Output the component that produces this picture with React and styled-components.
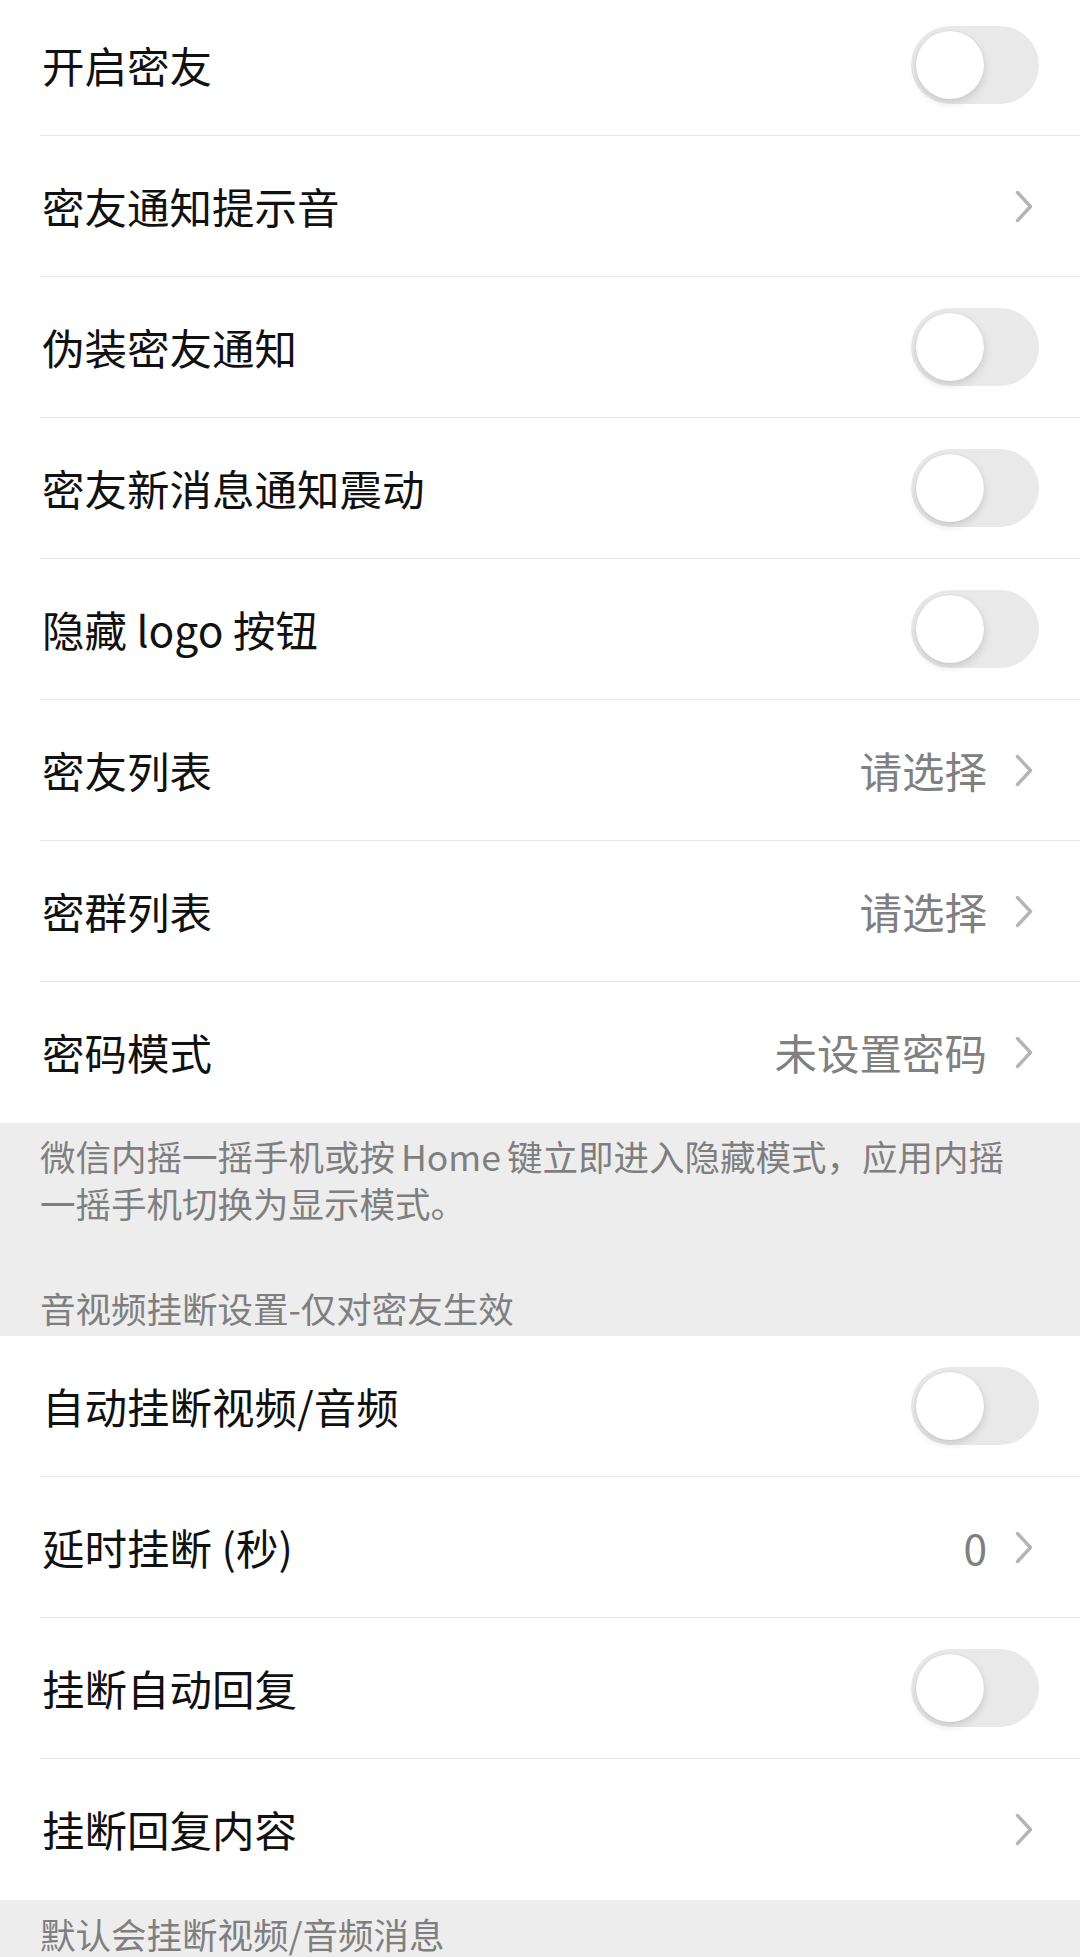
import React from "react";
import styled, { createGlobalStyle } from "styled-components";

const Global = createGlobalStyle`
  html, body { margin: 0; padding: 0; background: #ffffff; }
  body {
    font-family: "PingFang SC", "Noto Sans CJK SC", "Noto Sans", sans-serif;
    -webkit-font-smoothing: antialiased;
    overflow: hidden;
  }
`;

const Page = styled.div`
  width: 1080px;
  height: 1957px;
  overflow: hidden;
  background: #ededed;
`;

const Scroller = styled.div`
  margin-top: -5px;
`;

const Section = styled.div`
  background: #ffffff;
`;

const Row = styled.div`
  padding-left: 40px;
  background: #ffffff;
`;

const RowInner = styled.div`
  height: ${(p) => (p.$last ? "141px" : "140px")};
  border-bottom: ${(p) => (p.$last ? "none" : "1.5px solid #e8e8e8")};
  display: flex;
  align-items: center;
  justify-content: space-between;
  padding-right: 41px;
`;

const Label = styled.span`
  font-size: 42.5px;
  color: #111111;
  line-height: 1;
  padding-left: 2px;
`;

const Accessory = styled.div`
  display: flex;
  align-items: center;
  gap: 28px;
`;

const Value = styled.span`
  font-size: 42.5px;
  color: #808080;
  line-height: 1;
`;

const ChevronWrap = styled.span`
  display: flex;
  margin-right: 6px;
`;

const Track = styled.div`
  width: 128px;
  height: 78px;
  border-radius: 39px;
  background: #e9e9ea;
  box-sizing: border-box;
  padding: 5px;
  display: flex;
  align-items: center;
`;

const Knob = styled.div`
  width: 68px;
  height: 68px;
  border-radius: 50%;
  background: #ffffff;
  box-shadow: 0 4px 9px rgba(0, 0, 0, 0.13), 0 0 1.5px rgba(0, 0, 0, 0.12);
`;

const Footer = styled.div`
  background: #ededed;
  padding: ${(p) => p.$pad || "9px 40px 0"};
  color: #7f7f7f;
  font-size: 35.5px;
  line-height: 47px;
`;

const Note = styled.div`
  padding-right: 30px;
`;

const Latin = styled.span`
  margin: 0 6px;
`;

const Header = styled.div`
  margin-top: 58px;
  padding-bottom: 5px;
`;

const Chevron = () => (
  <ChevronWrap>
    <svg width="18" height="33" viewBox="0 0 18 33" fill="none">
      <path
        d="M2.5 2.5 L15.5 16.5 L2.5 30.5"
        stroke="#b5b5b5"
        strokeWidth="3.4"
        strokeLinecap="round"
        strokeLinejoin="round"
      />
    </svg>
  </ChevronWrap>
);

const Switch = () => (
  <Track>
    <Knob />
  </Track>
);

const Item = ({ label, type, value, last }) => (
  <Row>
    <RowInner $last={last}>
      <Label>{label}</Label>
      {type === "switch" ? (
        <Switch />
      ) : (
        <Accessory>
          {value !== undefined && <Value>{value}</Value>}
          <Chevron />
        </Accessory>
      )}
    </RowInner>
  </Row>
);

const section1 = [
  { label: "开启密友", type: "switch" },
  { label: "密友通知提示音", type: "link" },
  { label: "伪装密友通知", type: "switch" },
  { label: "密友新消息通知震动", type: "switch" },
  { label: "隐藏 logo 按钮", type: "switch" },
  { label: "密友列表", type: "link", value: "请选择" },
  { label: "密群列表", type: "link", value: "请选择" },
  { label: "密码模式", type: "link", value: "未设置密码" },
];

const section2 = [
  { label: "自动挂断视频/音频", type: "switch" },
  { label: "延时挂断 (秒)", type: "link", value: "0" },
  { label: "挂断自动回复", type: "switch" },
  { label: "挂断回复内容", type: "link" },
];

export default function App() {
  return (
    <Page>
      <Global />
      <Scroller>
        <Section>
          {section1.map((it, i) => (
            <Item key={it.label} {...it} last={i === section1.length - 1} />
          ))}
        </Section>
        <Footer>
          <Note>
            微信内摇一摇手机或按<Latin>Home</Latin>键立即进入隐藏模式，应用内摇一摇手机切换为显示模式。
          </Note>
          <Header>音视频挂断设置-仅对密友生效</Header>
        </Footer>
        <Section>
          {section2.map((it, i) => (
            <Item key={it.label} {...it} last={i === section2.length - 1} />
          ))}
        </Section>
        <Footer $pad="10px 40px 0">默认会挂断视频/音频消息</Footer>
      </Scroller>
    </Page>
  );
}
